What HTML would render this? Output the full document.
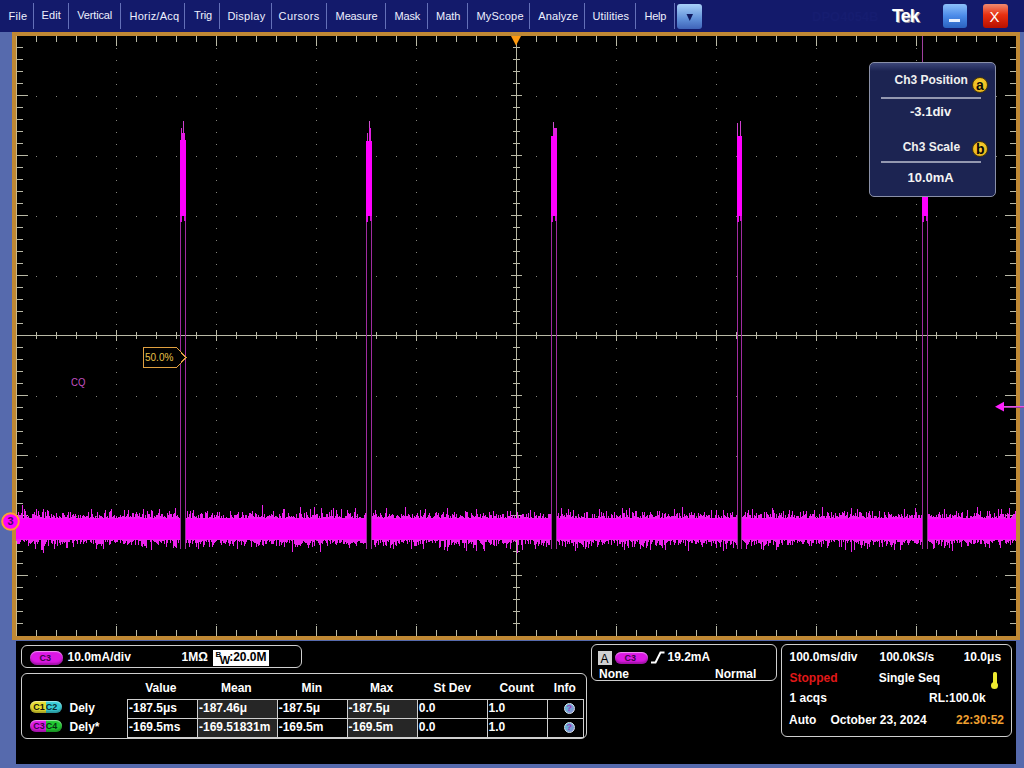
<!DOCTYPE html><html><head><meta charset="utf-8"><style>
*{margin:0;padding:0;box-sizing:border-box}
html,body{width:1024px;height:768px;overflow:hidden;background:#566aad;font-family:"Liberation Sans", sans-serif}
.t{position:absolute;white-space:nowrap;line-height:1}
.a{position:absolute}
</style></head><body>
<div class="a" style="left:0;top:0;width:1024px;height:32px;background:#131a6b"></div>
<div class="t" style="left:8.60px;top:10.69px;font-size:11px;font-weight:normal;color:#eef0ff;letter-spacing:0.230px">File</div>
<div class="t" style="left:41.60px;top:9.69px;font-size:11px;font-weight:normal;color:#eef0ff;letter-spacing:0.100px">Edit</div>
<div class="t" style="left:77.20px;top:9.69px;font-size:11px;font-weight:normal;color:#eef0ff;letter-spacing:-0.140px">Vertical</div>
<div class="t" style="left:129.60px;top:10.69px;font-size:11px;font-weight:normal;color:#eef0ff;letter-spacing:0.220px">Horiz/Acq</div>
<div class="t" style="left:194.00px;top:9.69px;font-size:11px;font-weight:normal;color:#eef0ff;letter-spacing:-0.170px">Trig</div>
<div class="t" style="left:227.40px;top:10.69px;font-size:11px;font-weight:normal;color:#eef0ff;letter-spacing:0.280px">Display</div>
<div class="t" style="left:278.60px;top:10.69px;font-size:11px;font-weight:normal;color:#eef0ff;letter-spacing:0.370px">Cursors</div>
<div class="t" style="left:335.60px;top:10.69px;font-size:11px;font-weight:normal;color:#eef0ff;letter-spacing:-0.130px">Measure</div>
<div class="t" style="left:394.40px;top:10.69px;font-size:11px;font-weight:normal;color:#eef0ff;letter-spacing:-0.100px">Mask</div>
<div class="t" style="left:436.00px;top:10.69px;font-size:11px;font-weight:normal;color:#eef0ff;letter-spacing:0.000px">Math</div>
<div class="t" style="left:476.40px;top:10.69px;font-size:11px;font-weight:normal;color:#eef0ff;letter-spacing:0.220px">MyScope</div>
<div class="t" style="left:538.20px;top:10.69px;font-size:11px;font-weight:normal;color:#eef0ff;letter-spacing:0.130px">Analyze</div>
<div class="t" style="left:592.40px;top:10.69px;font-size:11px;font-weight:normal;color:#eef0ff;letter-spacing:0.150px">Utilities</div>
<div class="t" style="left:644.60px;top:10.69px;font-size:11px;font-weight:normal;color:#eef0ff;letter-spacing:-0.270px">Help</div>
<div class="a" style="left:33px;top:3px;width:1px;height:26px;background:#6470b8"></div>
<div class="a" style="left:68px;top:3px;width:1px;height:26px;background:#6470b8"></div>
<div class="a" style="left:120px;top:3px;width:1px;height:26px;background:#6470b8"></div>
<div class="a" style="left:184px;top:3px;width:1px;height:26px;background:#6470b8"></div>
<div class="a" style="left:219px;top:3px;width:1px;height:26px;background:#6470b8"></div>
<div class="a" style="left:271px;top:3px;width:1px;height:26px;background:#6470b8"></div>
<div class="a" style="left:326px;top:3px;width:1px;height:26px;background:#6470b8"></div>
<div class="a" style="left:385px;top:3px;width:1px;height:26px;background:#6470b8"></div>
<div class="a" style="left:427px;top:3px;width:1px;height:26px;background:#6470b8"></div>
<div class="a" style="left:467px;top:3px;width:1px;height:26px;background:#6470b8"></div>
<div class="a" style="left:529px;top:3px;width:1px;height:26px;background:#6470b8"></div>
<div class="a" style="left:584px;top:3px;width:1px;height:26px;background:#6470b8"></div>
<div class="a" style="left:635px;top:3px;width:1px;height:26px;background:#6470b8"></div>
<div class="a" style="left:674px;top:3px;width:1px;height:26px;background:#6470b8"></div>
<div class="a" style="left:677px;top:4px;width:25px;height:25px;border-radius:3px;background:linear-gradient(#a8d0f8,#5f8fd8 60%,#3f63b8)"></div>
<svg class="a" style="left:0;top:0" width="1024" height="32"><polygon points="686.5,14 693,14 689.75,21" fill="#101a60"/></svg>
<div class="t" style="left:812.00px;top:10.00px;font-size:13px;font-weight:bold;color:#161d70;">DPO4054B</div>
<div class="t" style="left:892.00px;top:7.26px;font-size:18px;font-weight:bold;color:#fff;letter-spacing:-0.9px;text-shadow:1px 1px 0 #8a8a9a">Tek</div>
<div class="a" style="left:943px;top:4px;width:24px;height:24px;border-radius:3px;background:linear-gradient(#8cc0fa,#4a8ae8 50%,#2a62c0)"></div>
<div class="a" style="left:949px;top:19px;width:11px;height:3px;background:#e8f0ff"></div>
<div class="a" style="left:983px;top:4px;width:25px;height:24px;border-radius:3px;background:linear-gradient(#f08a70,#e83010 45%,#b81000)"></div>
<div class="t" style="left:989.50px;top:9.30px;font-size:15px;font-weight:normal;color:#fff;">X</div>
<div class="a" style="left:12px;top:32px;width:1008px;height:608px;background:#bf8834"></div>
<div class="a" style="left:16px;top:36px;width:1000px;height:600px;background:#000"></div>
<div class="a" style="left:16px;top:641px;width:1000px;height:123px;background:#000"></div>
<svg class="a" style="left:0;top:0" width="1024" height="768" shape-rendering="crispEdges"><path d="M116 48h1v1h-1zM116 60h1v1h-1zM116 72h1v1h-1zM116 84h1v1h-1zM116 96h1v1h-1zM116 108h1v1h-1zM116 120h1v1h-1zM116 132h1v1h-1zM116 144h1v1h-1zM116 156h1v1h-1zM116 168h1v1h-1zM116 180h1v1h-1zM116 192h1v1h-1zM116 204h1v1h-1zM116 216h1v1h-1zM116 228h1v1h-1zM116 240h1v1h-1zM116 252h1v1h-1zM116 264h1v1h-1zM116 276h1v1h-1zM116 288h1v1h-1zM116 300h1v1h-1zM116 312h1v1h-1zM116 324h1v1h-1zM116 336h1v1h-1zM116 348h1v1h-1zM116 360h1v1h-1zM116 372h1v1h-1zM116 384h1v1h-1zM116 396h1v1h-1zM116 408h1v1h-1zM116 420h1v1h-1zM116 432h1v1h-1zM116 444h1v1h-1zM116 456h1v1h-1zM116 468h1v1h-1zM116 480h1v1h-1zM116 492h1v1h-1zM116 504h1v1h-1zM116 516h1v1h-1zM116 528h1v1h-1zM116 540h1v1h-1zM116 552h1v1h-1zM116 564h1v1h-1zM116 576h1v1h-1zM116 588h1v1h-1zM116 600h1v1h-1zM116 612h1v1h-1zM116 624h1v1h-1zM216 48h1v1h-1zM216 60h1v1h-1zM216 72h1v1h-1zM216 84h1v1h-1zM216 96h1v1h-1zM216 108h1v1h-1zM216 120h1v1h-1zM216 132h1v1h-1zM216 144h1v1h-1zM216 156h1v1h-1zM216 168h1v1h-1zM216 180h1v1h-1zM216 192h1v1h-1zM216 204h1v1h-1zM216 216h1v1h-1zM216 228h1v1h-1zM216 240h1v1h-1zM216 252h1v1h-1zM216 264h1v1h-1zM216 276h1v1h-1zM216 288h1v1h-1zM216 300h1v1h-1zM216 312h1v1h-1zM216 324h1v1h-1zM216 336h1v1h-1zM216 348h1v1h-1zM216 360h1v1h-1zM216 372h1v1h-1zM216 384h1v1h-1zM216 396h1v1h-1zM216 408h1v1h-1zM216 420h1v1h-1zM216 432h1v1h-1zM216 444h1v1h-1zM216 456h1v1h-1zM216 468h1v1h-1zM216 480h1v1h-1zM216 492h1v1h-1zM216 504h1v1h-1zM216 516h1v1h-1zM216 528h1v1h-1zM216 540h1v1h-1zM216 552h1v1h-1zM216 564h1v1h-1zM216 576h1v1h-1zM216 588h1v1h-1zM216 600h1v1h-1zM216 612h1v1h-1zM216 624h1v1h-1zM316 48h1v1h-1zM316 60h1v1h-1zM316 72h1v1h-1zM316 84h1v1h-1zM316 96h1v1h-1zM316 108h1v1h-1zM316 120h1v1h-1zM316 132h1v1h-1zM316 144h1v1h-1zM316 156h1v1h-1zM316 168h1v1h-1zM316 180h1v1h-1zM316 192h1v1h-1zM316 204h1v1h-1zM316 216h1v1h-1zM316 228h1v1h-1zM316 240h1v1h-1zM316 252h1v1h-1zM316 264h1v1h-1zM316 276h1v1h-1zM316 288h1v1h-1zM316 300h1v1h-1zM316 312h1v1h-1zM316 324h1v1h-1zM316 336h1v1h-1zM316 348h1v1h-1zM316 360h1v1h-1zM316 372h1v1h-1zM316 384h1v1h-1zM316 396h1v1h-1zM316 408h1v1h-1zM316 420h1v1h-1zM316 432h1v1h-1zM316 444h1v1h-1zM316 456h1v1h-1zM316 468h1v1h-1zM316 480h1v1h-1zM316 492h1v1h-1zM316 504h1v1h-1zM316 516h1v1h-1zM316 528h1v1h-1zM316 540h1v1h-1zM316 552h1v1h-1zM316 564h1v1h-1zM316 576h1v1h-1zM316 588h1v1h-1zM316 600h1v1h-1zM316 612h1v1h-1zM316 624h1v1h-1zM416 48h1v1h-1zM416 60h1v1h-1zM416 72h1v1h-1zM416 84h1v1h-1zM416 96h1v1h-1zM416 108h1v1h-1zM416 120h1v1h-1zM416 132h1v1h-1zM416 144h1v1h-1zM416 156h1v1h-1zM416 168h1v1h-1zM416 180h1v1h-1zM416 192h1v1h-1zM416 204h1v1h-1zM416 216h1v1h-1zM416 228h1v1h-1zM416 240h1v1h-1zM416 252h1v1h-1zM416 264h1v1h-1zM416 276h1v1h-1zM416 288h1v1h-1zM416 300h1v1h-1zM416 312h1v1h-1zM416 324h1v1h-1zM416 336h1v1h-1zM416 348h1v1h-1zM416 360h1v1h-1zM416 372h1v1h-1zM416 384h1v1h-1zM416 396h1v1h-1zM416 408h1v1h-1zM416 420h1v1h-1zM416 432h1v1h-1zM416 444h1v1h-1zM416 456h1v1h-1zM416 468h1v1h-1zM416 480h1v1h-1zM416 492h1v1h-1zM416 504h1v1h-1zM416 516h1v1h-1zM416 528h1v1h-1zM416 540h1v1h-1zM416 552h1v1h-1zM416 564h1v1h-1zM416 576h1v1h-1zM416 588h1v1h-1zM416 600h1v1h-1zM416 612h1v1h-1zM416 624h1v1h-1zM616 48h1v1h-1zM616 60h1v1h-1zM616 72h1v1h-1zM616 84h1v1h-1zM616 96h1v1h-1zM616 108h1v1h-1zM616 120h1v1h-1zM616 132h1v1h-1zM616 144h1v1h-1zM616 156h1v1h-1zM616 168h1v1h-1zM616 180h1v1h-1zM616 192h1v1h-1zM616 204h1v1h-1zM616 216h1v1h-1zM616 228h1v1h-1zM616 240h1v1h-1zM616 252h1v1h-1zM616 264h1v1h-1zM616 276h1v1h-1zM616 288h1v1h-1zM616 300h1v1h-1zM616 312h1v1h-1zM616 324h1v1h-1zM616 336h1v1h-1zM616 348h1v1h-1zM616 360h1v1h-1zM616 372h1v1h-1zM616 384h1v1h-1zM616 396h1v1h-1zM616 408h1v1h-1zM616 420h1v1h-1zM616 432h1v1h-1zM616 444h1v1h-1zM616 456h1v1h-1zM616 468h1v1h-1zM616 480h1v1h-1zM616 492h1v1h-1zM616 504h1v1h-1zM616 516h1v1h-1zM616 528h1v1h-1zM616 540h1v1h-1zM616 552h1v1h-1zM616 564h1v1h-1zM616 576h1v1h-1zM616 588h1v1h-1zM616 600h1v1h-1zM616 612h1v1h-1zM616 624h1v1h-1zM716 48h1v1h-1zM716 60h1v1h-1zM716 72h1v1h-1zM716 84h1v1h-1zM716 96h1v1h-1zM716 108h1v1h-1zM716 120h1v1h-1zM716 132h1v1h-1zM716 144h1v1h-1zM716 156h1v1h-1zM716 168h1v1h-1zM716 180h1v1h-1zM716 192h1v1h-1zM716 204h1v1h-1zM716 216h1v1h-1zM716 228h1v1h-1zM716 240h1v1h-1zM716 252h1v1h-1zM716 264h1v1h-1zM716 276h1v1h-1zM716 288h1v1h-1zM716 300h1v1h-1zM716 312h1v1h-1zM716 324h1v1h-1zM716 336h1v1h-1zM716 348h1v1h-1zM716 360h1v1h-1zM716 372h1v1h-1zM716 384h1v1h-1zM716 396h1v1h-1zM716 408h1v1h-1zM716 420h1v1h-1zM716 432h1v1h-1zM716 444h1v1h-1zM716 456h1v1h-1zM716 468h1v1h-1zM716 480h1v1h-1zM716 492h1v1h-1zM716 504h1v1h-1zM716 516h1v1h-1zM716 528h1v1h-1zM716 540h1v1h-1zM716 552h1v1h-1zM716 564h1v1h-1zM716 576h1v1h-1zM716 588h1v1h-1zM716 600h1v1h-1zM716 612h1v1h-1zM716 624h1v1h-1zM816 48h1v1h-1zM816 60h1v1h-1zM816 72h1v1h-1zM816 84h1v1h-1zM816 96h1v1h-1zM816 108h1v1h-1zM816 120h1v1h-1zM816 132h1v1h-1zM816 144h1v1h-1zM816 156h1v1h-1zM816 168h1v1h-1zM816 180h1v1h-1zM816 192h1v1h-1zM816 204h1v1h-1zM816 216h1v1h-1zM816 228h1v1h-1zM816 240h1v1h-1zM816 252h1v1h-1zM816 264h1v1h-1zM816 276h1v1h-1zM816 288h1v1h-1zM816 300h1v1h-1zM816 312h1v1h-1zM816 324h1v1h-1zM816 336h1v1h-1zM816 348h1v1h-1zM816 360h1v1h-1zM816 372h1v1h-1zM816 384h1v1h-1zM816 396h1v1h-1zM816 408h1v1h-1zM816 420h1v1h-1zM816 432h1v1h-1zM816 444h1v1h-1zM816 456h1v1h-1zM816 468h1v1h-1zM816 480h1v1h-1zM816 492h1v1h-1zM816 504h1v1h-1zM816 516h1v1h-1zM816 528h1v1h-1zM816 540h1v1h-1zM816 552h1v1h-1zM816 564h1v1h-1zM816 576h1v1h-1zM816 588h1v1h-1zM816 600h1v1h-1zM816 612h1v1h-1zM816 624h1v1h-1zM916 48h1v1h-1zM916 60h1v1h-1zM916 72h1v1h-1zM916 84h1v1h-1zM916 96h1v1h-1zM916 108h1v1h-1zM916 120h1v1h-1zM916 132h1v1h-1zM916 144h1v1h-1zM916 156h1v1h-1zM916 168h1v1h-1zM916 180h1v1h-1zM916 192h1v1h-1zM916 204h1v1h-1zM916 216h1v1h-1zM916 228h1v1h-1zM916 240h1v1h-1zM916 252h1v1h-1zM916 264h1v1h-1zM916 276h1v1h-1zM916 288h1v1h-1zM916 300h1v1h-1zM916 312h1v1h-1zM916 324h1v1h-1zM916 336h1v1h-1zM916 348h1v1h-1zM916 360h1v1h-1zM916 372h1v1h-1zM916 384h1v1h-1zM916 396h1v1h-1zM916 408h1v1h-1zM916 420h1v1h-1zM916 432h1v1h-1zM916 444h1v1h-1zM916 456h1v1h-1zM916 468h1v1h-1zM916 480h1v1h-1zM916 492h1v1h-1zM916 504h1v1h-1zM916 516h1v1h-1zM916 528h1v1h-1zM916 540h1v1h-1zM916 552h1v1h-1zM916 564h1v1h-1zM916 576h1v1h-1zM916 588h1v1h-1zM916 600h1v1h-1zM916 612h1v1h-1zM916 624h1v1h-1zM36 96h1v1h-1zM56 96h1v1h-1zM76 96h1v1h-1zM96 96h1v1h-1zM136 96h1v1h-1zM156 96h1v1h-1zM176 96h1v1h-1zM196 96h1v1h-1zM236 96h1v1h-1zM256 96h1v1h-1zM276 96h1v1h-1zM296 96h1v1h-1zM336 96h1v1h-1zM356 96h1v1h-1zM376 96h1v1h-1zM396 96h1v1h-1zM436 96h1v1h-1zM456 96h1v1h-1zM476 96h1v1h-1zM496 96h1v1h-1zM536 96h1v1h-1zM556 96h1v1h-1zM576 96h1v1h-1zM596 96h1v1h-1zM636 96h1v1h-1zM656 96h1v1h-1zM676 96h1v1h-1zM696 96h1v1h-1zM736 96h1v1h-1zM756 96h1v1h-1zM776 96h1v1h-1zM796 96h1v1h-1zM836 96h1v1h-1zM856 96h1v1h-1zM876 96h1v1h-1zM896 96h1v1h-1zM936 96h1v1h-1zM956 96h1v1h-1zM976 96h1v1h-1zM996 96h1v1h-1zM36 156h1v1h-1zM56 156h1v1h-1zM76 156h1v1h-1zM96 156h1v1h-1zM136 156h1v1h-1zM156 156h1v1h-1zM176 156h1v1h-1zM196 156h1v1h-1zM236 156h1v1h-1zM256 156h1v1h-1zM276 156h1v1h-1zM296 156h1v1h-1zM336 156h1v1h-1zM356 156h1v1h-1zM376 156h1v1h-1zM396 156h1v1h-1zM436 156h1v1h-1zM456 156h1v1h-1zM476 156h1v1h-1zM496 156h1v1h-1zM536 156h1v1h-1zM556 156h1v1h-1zM576 156h1v1h-1zM596 156h1v1h-1zM636 156h1v1h-1zM656 156h1v1h-1zM676 156h1v1h-1zM696 156h1v1h-1zM736 156h1v1h-1zM756 156h1v1h-1zM776 156h1v1h-1zM796 156h1v1h-1zM836 156h1v1h-1zM856 156h1v1h-1zM876 156h1v1h-1zM896 156h1v1h-1zM936 156h1v1h-1zM956 156h1v1h-1zM976 156h1v1h-1zM996 156h1v1h-1zM36 216h1v1h-1zM56 216h1v1h-1zM76 216h1v1h-1zM96 216h1v1h-1zM136 216h1v1h-1zM156 216h1v1h-1zM176 216h1v1h-1zM196 216h1v1h-1zM236 216h1v1h-1zM256 216h1v1h-1zM276 216h1v1h-1zM296 216h1v1h-1zM336 216h1v1h-1zM356 216h1v1h-1zM376 216h1v1h-1zM396 216h1v1h-1zM436 216h1v1h-1zM456 216h1v1h-1zM476 216h1v1h-1zM496 216h1v1h-1zM536 216h1v1h-1zM556 216h1v1h-1zM576 216h1v1h-1zM596 216h1v1h-1zM636 216h1v1h-1zM656 216h1v1h-1zM676 216h1v1h-1zM696 216h1v1h-1zM736 216h1v1h-1zM756 216h1v1h-1zM776 216h1v1h-1zM796 216h1v1h-1zM836 216h1v1h-1zM856 216h1v1h-1zM876 216h1v1h-1zM896 216h1v1h-1zM936 216h1v1h-1zM956 216h1v1h-1zM976 216h1v1h-1zM996 216h1v1h-1zM36 276h1v1h-1zM56 276h1v1h-1zM76 276h1v1h-1zM96 276h1v1h-1zM136 276h1v1h-1zM156 276h1v1h-1zM176 276h1v1h-1zM196 276h1v1h-1zM236 276h1v1h-1zM256 276h1v1h-1zM276 276h1v1h-1zM296 276h1v1h-1zM336 276h1v1h-1zM356 276h1v1h-1zM376 276h1v1h-1zM396 276h1v1h-1zM436 276h1v1h-1zM456 276h1v1h-1zM476 276h1v1h-1zM496 276h1v1h-1zM536 276h1v1h-1zM556 276h1v1h-1zM576 276h1v1h-1zM596 276h1v1h-1zM636 276h1v1h-1zM656 276h1v1h-1zM676 276h1v1h-1zM696 276h1v1h-1zM736 276h1v1h-1zM756 276h1v1h-1zM776 276h1v1h-1zM796 276h1v1h-1zM836 276h1v1h-1zM856 276h1v1h-1zM876 276h1v1h-1zM896 276h1v1h-1zM936 276h1v1h-1zM956 276h1v1h-1zM976 276h1v1h-1zM996 276h1v1h-1zM36 396h1v1h-1zM56 396h1v1h-1zM76 396h1v1h-1zM96 396h1v1h-1zM136 396h1v1h-1zM156 396h1v1h-1zM176 396h1v1h-1zM196 396h1v1h-1zM236 396h1v1h-1zM256 396h1v1h-1zM276 396h1v1h-1zM296 396h1v1h-1zM336 396h1v1h-1zM356 396h1v1h-1zM376 396h1v1h-1zM396 396h1v1h-1zM436 396h1v1h-1zM456 396h1v1h-1zM476 396h1v1h-1zM496 396h1v1h-1zM536 396h1v1h-1zM556 396h1v1h-1zM576 396h1v1h-1zM596 396h1v1h-1zM636 396h1v1h-1zM656 396h1v1h-1zM676 396h1v1h-1zM696 396h1v1h-1zM736 396h1v1h-1zM756 396h1v1h-1zM776 396h1v1h-1zM796 396h1v1h-1zM836 396h1v1h-1zM856 396h1v1h-1zM876 396h1v1h-1zM896 396h1v1h-1zM936 396h1v1h-1zM956 396h1v1h-1zM976 396h1v1h-1zM996 396h1v1h-1zM36 456h1v1h-1zM56 456h1v1h-1zM76 456h1v1h-1zM96 456h1v1h-1zM136 456h1v1h-1zM156 456h1v1h-1zM176 456h1v1h-1zM196 456h1v1h-1zM236 456h1v1h-1zM256 456h1v1h-1zM276 456h1v1h-1zM296 456h1v1h-1zM336 456h1v1h-1zM356 456h1v1h-1zM376 456h1v1h-1zM396 456h1v1h-1zM436 456h1v1h-1zM456 456h1v1h-1zM476 456h1v1h-1zM496 456h1v1h-1zM536 456h1v1h-1zM556 456h1v1h-1zM576 456h1v1h-1zM596 456h1v1h-1zM636 456h1v1h-1zM656 456h1v1h-1zM676 456h1v1h-1zM696 456h1v1h-1zM736 456h1v1h-1zM756 456h1v1h-1zM776 456h1v1h-1zM796 456h1v1h-1zM836 456h1v1h-1zM856 456h1v1h-1zM876 456h1v1h-1zM896 456h1v1h-1zM936 456h1v1h-1zM956 456h1v1h-1zM976 456h1v1h-1zM996 456h1v1h-1zM36 516h1v1h-1zM56 516h1v1h-1zM76 516h1v1h-1zM96 516h1v1h-1zM136 516h1v1h-1zM156 516h1v1h-1zM176 516h1v1h-1zM196 516h1v1h-1zM236 516h1v1h-1zM256 516h1v1h-1zM276 516h1v1h-1zM296 516h1v1h-1zM336 516h1v1h-1zM356 516h1v1h-1zM376 516h1v1h-1zM396 516h1v1h-1zM436 516h1v1h-1zM456 516h1v1h-1zM476 516h1v1h-1zM496 516h1v1h-1zM536 516h1v1h-1zM556 516h1v1h-1zM576 516h1v1h-1zM596 516h1v1h-1zM636 516h1v1h-1zM656 516h1v1h-1zM676 516h1v1h-1zM696 516h1v1h-1zM736 516h1v1h-1zM756 516h1v1h-1zM776 516h1v1h-1zM796 516h1v1h-1zM836 516h1v1h-1zM856 516h1v1h-1zM876 516h1v1h-1zM896 516h1v1h-1zM936 516h1v1h-1zM956 516h1v1h-1zM976 516h1v1h-1zM996 516h1v1h-1zM36 576h1v1h-1zM56 576h1v1h-1zM76 576h1v1h-1zM96 576h1v1h-1zM136 576h1v1h-1zM156 576h1v1h-1zM176 576h1v1h-1zM196 576h1v1h-1zM236 576h1v1h-1zM256 576h1v1h-1zM276 576h1v1h-1zM296 576h1v1h-1zM336 576h1v1h-1zM356 576h1v1h-1zM376 576h1v1h-1zM396 576h1v1h-1zM436 576h1v1h-1zM456 576h1v1h-1zM476 576h1v1h-1zM496 576h1v1h-1zM536 576h1v1h-1zM556 576h1v1h-1zM576 576h1v1h-1zM596 576h1v1h-1zM636 576h1v1h-1zM656 576h1v1h-1zM676 576h1v1h-1zM696 576h1v1h-1zM736 576h1v1h-1zM756 576h1v1h-1zM776 576h1v1h-1zM796 576h1v1h-1zM836 576h1v1h-1zM856 576h1v1h-1zM876 576h1v1h-1zM896 576h1v1h-1zM936 576h1v1h-1zM956 576h1v1h-1zM976 576h1v1h-1zM996 576h1v1h-1z" fill="#84847c"/><path d="M36 36h1v6h-1zM36 630h1v6h-1zM56 36h1v6h-1zM56 630h1v6h-1zM76 36h1v6h-1zM76 630h1v6h-1zM96 36h1v6h-1zM96 630h1v6h-1zM116 36h1v10h-1zM116 626h1v10h-1zM136 36h1v6h-1zM136 630h1v6h-1zM156 36h1v6h-1zM156 630h1v6h-1zM176 36h1v6h-1zM176 630h1v6h-1zM196 36h1v6h-1zM196 630h1v6h-1zM216 36h1v10h-1zM216 626h1v10h-1zM236 36h1v6h-1zM236 630h1v6h-1zM256 36h1v6h-1zM256 630h1v6h-1zM276 36h1v6h-1zM276 630h1v6h-1zM296 36h1v6h-1zM296 630h1v6h-1zM316 36h1v10h-1zM316 626h1v10h-1zM336 36h1v6h-1zM336 630h1v6h-1zM356 36h1v6h-1zM356 630h1v6h-1zM376 36h1v6h-1zM376 630h1v6h-1zM396 36h1v6h-1zM396 630h1v6h-1zM416 36h1v10h-1zM416 626h1v10h-1zM436 36h1v6h-1zM436 630h1v6h-1zM456 36h1v6h-1zM456 630h1v6h-1zM476 36h1v6h-1zM476 630h1v6h-1zM496 36h1v6h-1zM496 630h1v6h-1zM516 36h1v10h-1zM516 626h1v10h-1zM536 36h1v6h-1zM536 630h1v6h-1zM556 36h1v6h-1zM556 630h1v6h-1zM576 36h1v6h-1zM576 630h1v6h-1zM596 36h1v6h-1zM596 630h1v6h-1zM616 36h1v10h-1zM616 626h1v10h-1zM636 36h1v6h-1zM636 630h1v6h-1zM656 36h1v6h-1zM656 630h1v6h-1zM676 36h1v6h-1zM676 630h1v6h-1zM696 36h1v6h-1zM696 630h1v6h-1zM716 36h1v10h-1zM716 626h1v10h-1zM736 36h1v6h-1zM736 630h1v6h-1zM756 36h1v6h-1zM756 630h1v6h-1zM776 36h1v6h-1zM776 630h1v6h-1zM796 36h1v6h-1zM796 630h1v6h-1zM816 36h1v10h-1zM816 626h1v10h-1zM836 36h1v6h-1zM836 630h1v6h-1zM856 36h1v6h-1zM856 630h1v6h-1zM876 36h1v6h-1zM876 630h1v6h-1zM896 36h1v6h-1zM896 630h1v6h-1zM916 36h1v10h-1zM916 626h1v10h-1zM936 36h1v6h-1zM936 630h1v6h-1zM956 36h1v6h-1zM956 630h1v6h-1zM976 36h1v6h-1zM976 630h1v6h-1zM996 36h1v6h-1zM996 630h1v6h-1zM17 47h6v1h-6zM1010 47h6v1h-6zM17 59h6v1h-6zM1010 59h6v1h-6zM17 71h6v1h-6zM1010 71h6v1h-6zM17 83h6v1h-6zM1010 83h6v1h-6zM17 95h11v1h-11zM1005 95h11v1h-11zM17 107h6v1h-6zM1010 107h6v1h-6zM17 119h6v1h-6zM1010 119h6v1h-6zM17 131h6v1h-6zM1010 131h6v1h-6zM17 143h6v1h-6zM1010 143h6v1h-6zM17 155h11v1h-11zM1005 155h11v1h-11zM17 167h6v1h-6zM1010 167h6v1h-6zM17 179h6v1h-6zM1010 179h6v1h-6zM17 191h6v1h-6zM1010 191h6v1h-6zM17 203h6v1h-6zM1010 203h6v1h-6zM17 215h11v1h-11zM1005 215h11v1h-11zM17 227h6v1h-6zM1010 227h6v1h-6zM17 239h6v1h-6zM1010 239h6v1h-6zM17 251h6v1h-6zM1010 251h6v1h-6zM17 263h6v1h-6zM1010 263h6v1h-6zM17 275h11v1h-11zM1005 275h11v1h-11zM17 287h6v1h-6zM1010 287h6v1h-6zM17 299h6v1h-6zM1010 299h6v1h-6zM17 311h6v1h-6zM1010 311h6v1h-6zM17 323h6v1h-6zM1010 323h6v1h-6zM17 335h11v1h-11zM1005 335h11v1h-11zM17 347h6v1h-6zM1010 347h6v1h-6zM17 359h6v1h-6zM1010 359h6v1h-6zM17 371h6v1h-6zM1010 371h6v1h-6zM17 383h6v1h-6zM1010 383h6v1h-6zM17 395h11v1h-11zM1005 395h11v1h-11zM17 407h6v1h-6zM1010 407h6v1h-6zM17 419h6v1h-6zM1010 419h6v1h-6zM17 431h6v1h-6zM1010 431h6v1h-6zM17 443h6v1h-6zM1010 443h6v1h-6zM17 455h11v1h-11zM1005 455h11v1h-11zM17 467h6v1h-6zM1010 467h6v1h-6zM17 479h6v1h-6zM1010 479h6v1h-6zM17 491h6v1h-6zM1010 491h6v1h-6zM17 503h6v1h-6zM1010 503h6v1h-6zM17 515h11v1h-11zM1005 515h11v1h-11zM17 527h6v1h-6zM1010 527h6v1h-6zM17 539h6v1h-6zM1010 539h6v1h-6zM17 551h6v1h-6zM1010 551h6v1h-6zM17 563h6v1h-6zM1010 563h6v1h-6zM17 575h11v1h-11zM1005 575h11v1h-11zM17 587h6v1h-6zM1010 587h6v1h-6zM17 599h6v1h-6zM1010 599h6v1h-6zM17 611h6v1h-6zM1010 611h6v1h-6zM17 623h6v1h-6zM1010 623h6v1h-6zM17 335h999v1h-999zM516 45h1v591h-1zM36 332h1v7h-1zM56 332h1v7h-1zM76 332h1v7h-1zM96 332h1v7h-1zM116 330h1v11h-1zM136 332h1v7h-1zM156 332h1v7h-1zM176 332h1v7h-1zM196 332h1v7h-1zM216 330h1v11h-1zM236 332h1v7h-1zM256 332h1v7h-1zM276 332h1v7h-1zM296 332h1v7h-1zM316 330h1v11h-1zM336 332h1v7h-1zM356 332h1v7h-1zM376 332h1v7h-1zM396 332h1v7h-1zM416 330h1v11h-1zM436 332h1v7h-1zM456 332h1v7h-1zM476 332h1v7h-1zM496 332h1v7h-1zM536 332h1v7h-1zM556 332h1v7h-1zM576 332h1v7h-1zM596 332h1v7h-1zM616 330h1v11h-1zM636 332h1v7h-1zM656 332h1v7h-1zM676 332h1v7h-1zM696 332h1v7h-1zM716 330h1v11h-1zM736 332h1v7h-1zM756 332h1v7h-1zM776 332h1v7h-1zM796 332h1v7h-1zM816 330h1v11h-1zM836 332h1v7h-1zM856 332h1v7h-1zM876 332h1v7h-1zM896 332h1v7h-1zM916 330h1v11h-1zM936 332h1v7h-1zM956 332h1v7h-1zM976 332h1v7h-1zM996 332h1v7h-1zM513 47h7v1h-7zM513 59h7v1h-7zM513 71h7v1h-7zM513 83h7v1h-7zM511 95h11v1h-11zM513 107h7v1h-7zM513 119h7v1h-7zM513 131h7v1h-7zM513 143h7v1h-7zM511 155h11v1h-11zM513 167h7v1h-7zM513 179h7v1h-7zM513 191h7v1h-7zM513 203h7v1h-7zM511 215h11v1h-11zM513 227h7v1h-7zM513 239h7v1h-7zM513 251h7v1h-7zM513 263h7v1h-7zM511 275h11v1h-11zM513 287h7v1h-7zM513 299h7v1h-7zM513 311h7v1h-7zM513 323h7v1h-7zM513 347h7v1h-7zM513 359h7v1h-7zM513 371h7v1h-7zM513 383h7v1h-7zM511 395h11v1h-11zM513 407h7v1h-7zM513 419h7v1h-7zM513 431h7v1h-7zM513 443h7v1h-7zM511 455h11v1h-11zM513 467h7v1h-7zM513 479h7v1h-7zM513 491h7v1h-7zM513 503h7v1h-7zM511 515h11v1h-11zM513 527h7v1h-7zM513 539h7v1h-7zM513 551h7v1h-7zM513 563h7v1h-7zM511 575h11v1h-11zM513 587h7v1h-7zM513 599h7v1h-7zM513 611h7v1h-7zM513 623h7v1h-7z" fill="#b9b9a6"/><rect x="16" y="36" width="1" height="600" fill="#c8b88a"/><path d="M16 514h1V541h-1zM17 517h1V544h-1zM18 512h1V544h-1zM19 515h1V544h-1zM20 515h1V542h-1zM21 513h1V540h-1zM22 505h1V540h-1zM23 518h1V541h-1zM24 509h1V542h-1zM25 511h1V540h-1zM26 515h1V541h-1zM27 517h1V540h-1zM28 516h1V546h-1zM29 518h1V543h-1zM30 518h1V544h-1zM31 518h1V543h-1zM32 514h1V542h-1zM33 514h1V541h-1zM34 512h1V544h-1zM35 515h1V549h-1zM36 509h1V542h-1zM37 516h1V544h-1zM38 511h1V542h-1zM39 515h1V540h-1zM40 517h1V540h-1zM41 517h1V550h-1zM42 512h1V550h-1zM43 509h1V553h-1zM44 518h1V546h-1zM45 512h1V544h-1zM46 516h1V542h-1zM47 510h1V540h-1zM48 511h1V546h-1zM49 516h1V540h-1zM50 518h1V540h-1zM51 514h1V543h-1zM52 517h1V544h-1zM53 515h1V541h-1zM54 516h1V549h-1zM55 518h1V544h-1zM56 513h1V540h-1zM57 517h1V546h-1zM58 518h1V540h-1zM59 516h1V543h-1zM60 517h1V545h-1zM61 518h1V542h-1zM62 513h1V544h-1zM63 513h1V542h-1zM64 515h1V543h-1zM65 517h1V542h-1zM66 517h1V548h-1zM67 515h1V548h-1zM68 512h1V542h-1zM69 518h1V542h-1zM70 512h1V540h-1zM71 517h1V540h-1zM72 515h1V543h-1zM73 514h1V547h-1zM74 516h1V541h-1zM75 514h1V540h-1zM76 518h1V541h-1zM77 518h1V544h-1zM78 515h1V540h-1zM79 518h1V540h-1zM80 515h1V544h-1zM81 518h1V542h-1zM82 516h1V540h-1zM83 515h1V544h-1zM84 516h1V542h-1zM85 517h1V541h-1zM86 516h1V543h-1zM87 516h1V540h-1zM88 512h1V540h-1zM89 518h1V540h-1zM90 517h1V542h-1zM91 509h1V543h-1zM92 514h1V540h-1zM93 517h1V544h-1zM94 518h1V540h-1zM95 516h1V543h-1zM96 518h1V549h-1zM97 512h1V545h-1zM98 518h1V544h-1zM99 515h1V544h-1zM100 516h1V544h-1zM101 516h1V546h-1zM102 517h1V544h-1zM103 518h1V549h-1zM104 513h1V540h-1zM105 510h1V542h-1zM106 517h1V540h-1zM107 516h1V542h-1zM108 518h1V540h-1zM109 512h1V545h-1zM110 511h1V544h-1zM111 509h1V541h-1zM112 517h1V541h-1zM113 516h1V540h-1zM114 515h1V542h-1zM115 518h1V543h-1zM116 516h1V542h-1zM117 518h1V542h-1zM118 517h1V540h-1zM119 517h1V540h-1zM120 515h1V543h-1zM121 517h1V540h-1zM122 516h1V541h-1zM123 516h1V544h-1zM124 510h1V544h-1zM125 517h1V543h-1zM126 516h1V541h-1zM127 514h1V545h-1zM128 510h1V544h-1zM129 517h1V543h-1zM130 516h1V542h-1zM131 517h1V545h-1zM132 513h1V542h-1zM133 513h1V541h-1zM134 517h1V540h-1zM135 514h1V545h-1zM136 512h1V540h-1zM137 514h1V540h-1zM138 516h1V545h-1zM139 513h1V541h-1zM140 517h1V541h-1zM141 517h1V546h-1zM142 514h1V547h-1zM143 509h1V544h-1zM144 518h1V546h-1zM145 515h1V546h-1zM146 518h1V548h-1zM147 511h1V540h-1zM148 514h1V540h-1zM149 514h1V540h-1zM150 517h1V542h-1zM151 510h1V550h-1zM152 511h1V540h-1zM153 518h1V541h-1zM154 516h1V542h-1zM155 517h1V542h-1zM156 515h1V543h-1zM157 515h1V544h-1zM158 513h1V545h-1zM159 509h1V541h-1zM160 516h1V542h-1zM161 514h1V543h-1zM162 514h1V541h-1zM163 517h1V541h-1zM164 516h1V544h-1zM165 517h1V540h-1zM166 518h1V547h-1zM167 513h1V543h-1zM168 515h1V540h-1zM169 511h1V540h-1zM170 514h1V543h-1zM171 514h1V540h-1zM172 517h1V541h-1zM173 514h1V548h-1zM174 513h1V546h-1zM175 508h1V547h-1zM176 516h1V548h-1zM177 515h1V540h-1zM178 517h1V543h-1zM179 518h1V540h-1zM180 516h1V541h-1zM181 518h1V540h-1zM182 514h1V540h-1zM183 506h1V541h-1zM184 511h1V543h-1zM185 518h1V541h-1zM186 518h1V543h-1zM187 511h1V540h-1zM188 517h1V543h-1zM189 514h1V547h-1zM190 511h1V543h-1zM191 518h1V540h-1zM192 513h1V544h-1zM193 510h1V541h-1zM194 516h1V540h-1zM195 517h1V543h-1zM196 517h1V547h-1zM197 518h1V543h-1zM198 515h1V549h-1zM199 518h1V542h-1zM200 514h1V544h-1zM201 513h1V542h-1zM202 514h1V541h-1zM203 518h1V547h-1zM204 518h1V545h-1zM205 512h1V541h-1zM206 513h1V542h-1zM207 511h1V540h-1zM208 518h1V542h-1zM209 517h1V547h-1zM210 517h1V540h-1zM211 515h1V542h-1zM212 513h1V547h-1zM213 518h1V545h-1zM214 515h1V543h-1zM215 517h1V542h-1zM216 515h1V541h-1zM217 512h1V540h-1zM218 516h1V540h-1zM219 512h1V540h-1zM220 518h1V543h-1zM221 516h1V545h-1zM222 518h1V541h-1zM223 515h1V543h-1zM224 518h1V543h-1zM225 518h1V544h-1zM226 517h1V542h-1zM227 518h1V540h-1zM228 518h1V543h-1zM229 518h1V546h-1zM230 511h1V544h-1zM231 515h1V541h-1zM232 517h1V544h-1zM233 518h1V546h-1zM234 515h1V542h-1zM235 515h1V541h-1zM236 515h1V540h-1zM237 514h1V549h-1zM238 512h1V541h-1zM239 518h1V542h-1zM240 518h1V541h-1zM241 517h1V545h-1zM242 512h1V541h-1zM243 515h1V542h-1zM244 518h1V546h-1zM245 515h1V544h-1zM246 515h1V542h-1zM247 518h1V540h-1zM248 516h1V540h-1zM249 513h1V540h-1zM250 513h1V541h-1zM251 514h1V547h-1zM252 511h1V541h-1zM253 516h1V542h-1zM254 517h1V543h-1zM255 513h1V543h-1zM256 514h1V547h-1zM257 517h1V544h-1zM258 515h1V546h-1zM259 517h1V545h-1zM260 517h1V542h-1zM261 516h1V540h-1zM262 505h1V545h-1zM263 517h1V546h-1zM264 514h1V541h-1zM265 518h1V544h-1zM266 517h1V544h-1zM267 516h1V541h-1zM268 516h1V540h-1zM269 515h1V542h-1zM270 516h1V541h-1zM271 514h1V544h-1zM272 515h1V544h-1zM273 511h1V544h-1zM274 517h1V541h-1zM275 516h1V540h-1zM276 517h1V546h-1zM277 517h1V540h-1zM278 518h1V540h-1zM279 514h1V546h-1zM280 516h1V542h-1zM281 518h1V545h-1zM282 513h1V543h-1zM283 509h1V542h-1zM284 509h1V547h-1zM285 518h1V542h-1zM286 517h1V543h-1zM287 517h1V542h-1zM288 513h1V540h-1zM289 516h1V543h-1zM290 517h1V540h-1zM291 516h1V541h-1zM292 517h1V552h-1zM293 516h1V540h-1zM294 517h1V544h-1zM295 518h1V547h-1zM296 514h1V545h-1zM297 518h1V547h-1zM298 518h1V545h-1zM299 513h1V545h-1zM300 507h1V546h-1zM301 514h1V544h-1zM302 517h1V543h-1zM303 518h1V541h-1zM304 513h1V542h-1zM305 518h1V543h-1zM306 512h1V543h-1zM307 515h1V545h-1zM308 517h1V548h-1zM309 518h1V545h-1zM310 509h1V543h-1zM311 517h1V541h-1zM312 515h1V547h-1zM313 515h1V542h-1zM314 507h1V546h-1zM315 515h1V540h-1zM316 514h1V540h-1zM317 514h1V541h-1zM318 518h1V543h-1zM319 516h1V545h-1zM320 518h1V552h-1zM321 508h1V543h-1zM322 513h1V544h-1zM323 517h1V541h-1zM324 517h1V540h-1zM325 517h1V541h-1zM326 514h1V543h-1zM327 514h1V546h-1zM328 517h1V540h-1zM329 512h1V541h-1zM330 516h1V544h-1zM331 510h1V540h-1zM332 516h1V543h-1zM333 508h1V542h-1zM334 518h1V541h-1zM335 516h1V544h-1zM336 510h1V545h-1zM337 514h1V543h-1zM338 517h1V540h-1zM339 516h1V543h-1zM340 517h1V543h-1zM341 509h1V542h-1zM342 518h1V540h-1zM343 518h1V544h-1zM344 518h1V544h-1zM345 516h1V542h-1zM346 516h1V544h-1zM347 510h1V543h-1zM348 513h1V545h-1zM349 514h1V548h-1zM350 513h1V544h-1zM351 517h1V543h-1zM352 516h1V543h-1zM353 518h1V542h-1zM354 512h1V543h-1zM355 508h1V544h-1zM356 518h1V546h-1zM357 514h1V542h-1zM358 518h1V541h-1zM359 517h1V541h-1zM360 517h1V543h-1zM361 518h1V543h-1zM362 518h1V543h-1zM363 518h1V544h-1zM364 515h1V543h-1zM365 513h1V543h-1zM366 518h1V544h-1zM367 515h1V541h-1zM368 518h1V541h-1zM369 515h1V540h-1zM370 513h1V541h-1zM371 517h1V540h-1zM372 516h1V540h-1zM373 513h1V540h-1zM374 515h1V545h-1zM375 510h1V547h-1zM376 514h1V543h-1zM377 517h1V541h-1zM378 516h1V545h-1zM379 517h1V540h-1zM380 513h1V543h-1zM381 515h1V540h-1zM382 517h1V542h-1zM383 518h1V546h-1zM384 517h1V542h-1zM385 513h1V545h-1zM386 508h1V546h-1zM387 517h1V541h-1zM388 516h1V542h-1zM389 514h1V540h-1zM390 516h1V548h-1zM391 515h1V545h-1zM392 514h1V544h-1zM393 515h1V549h-1zM394 518h1V542h-1zM395 518h1V545h-1zM396 516h1V546h-1zM397 515h1V541h-1zM398 516h1V543h-1zM399 517h1V544h-1zM400 518h1V540h-1zM401 514h1V542h-1zM402 516h1V542h-1zM403 515h1V543h-1zM404 516h1V541h-1zM405 507h1V540h-1zM406 516h1V541h-1zM407 516h1V544h-1zM408 514h1V540h-1zM409 515h1V542h-1zM410 517h1V540h-1zM411 518h1V549h-1zM412 514h1V540h-1zM413 518h1V542h-1zM414 516h1V546h-1zM415 517h1V546h-1zM416 515h1V546h-1zM417 513h1V542h-1zM418 516h1V545h-1zM419 518h1V541h-1zM420 510h1V544h-1zM421 516h1V540h-1zM422 517h1V544h-1zM423 515h1V549h-1zM424 513h1V541h-1zM425 509h1V540h-1zM426 518h1V543h-1zM427 517h1V540h-1zM428 515h1V542h-1zM429 513h1V542h-1zM430 516h1V541h-1zM431 518h1V541h-1zM432 518h1V543h-1zM433 517h1V540h-1zM434 516h1V541h-1zM435 513h1V543h-1zM436 512h1V541h-1zM437 515h1V541h-1zM438 513h1V540h-1zM439 517h1V548h-1zM440 518h1V547h-1zM441 515h1V541h-1zM442 514h1V541h-1zM443 512h1V541h-1zM444 517h1V550h-1zM445 517h1V547h-1zM446 514h1V540h-1zM447 508h1V551h-1zM448 515h1V547h-1zM449 518h1V545h-1zM450 516h1V540h-1zM451 518h1V545h-1zM452 514h1V543h-1zM453 515h1V542h-1zM454 512h1V545h-1zM455 517h1V543h-1zM456 514h1V544h-1zM457 518h1V542h-1zM458 518h1V544h-1zM459 517h1V546h-1zM460 515h1V540h-1zM461 516h1V540h-1zM462 516h1V543h-1zM463 517h1V543h-1zM464 518h1V548h-1zM465 511h1V543h-1zM466 512h1V551h-1zM467 512h1V540h-1zM468 517h1V544h-1zM469 518h1V543h-1zM470 518h1V542h-1zM471 513h1V544h-1zM472 515h1V542h-1zM473 516h1V548h-1zM474 517h1V545h-1zM475 516h1V545h-1zM476 509h1V551h-1zM477 514h1V540h-1zM478 517h1V540h-1zM479 517h1V541h-1zM480 514h1V543h-1zM481 518h1V544h-1zM482 516h1V545h-1zM483 513h1V549h-1zM484 516h1V551h-1zM485 515h1V542h-1zM486 517h1V542h-1zM487 517h1V540h-1zM488 518h1V542h-1zM489 512h1V543h-1zM490 515h1V545h-1zM491 515h1V544h-1zM492 518h1V540h-1zM493 511h1V545h-1zM494 516h1V546h-1zM495 516h1V540h-1zM496 514h1V546h-1zM497 518h1V540h-1zM498 515h1V544h-1zM499 518h1V541h-1zM500 515h1V540h-1zM501 517h1V540h-1zM502 514h1V543h-1zM503 514h1V544h-1zM504 518h1V543h-1zM505 517h1V543h-1zM506 518h1V548h-1zM507 511h1V544h-1zM508 516h1V543h-1zM509 516h1V542h-1zM510 511h1V549h-1zM511 517h1V543h-1zM512 515h1V540h-1zM513 518h1V542h-1zM514 515h1V541h-1zM515 518h1V542h-1zM516 518h1V540h-1zM517 512h1V553h-1zM518 516h1V545h-1zM519 518h1V540h-1zM520 516h1V540h-1zM521 515h1V545h-1zM522 514h1V550h-1zM523 514h1V540h-1zM524 517h1V540h-1zM525 517h1V544h-1zM526 514h1V540h-1zM527 517h1V541h-1zM528 513h1V544h-1zM529 518h1V540h-1zM530 510h1V544h-1zM531 517h1V540h-1zM532 518h1V540h-1zM533 518h1V541h-1zM534 512h1V545h-1zM535 516h1V549h-1zM536 515h1V544h-1zM537 518h1V542h-1zM538 516h1V546h-1zM539 516h1V544h-1zM540 513h1V540h-1zM541 518h1V545h-1zM542 516h1V543h-1zM543 514h1V546h-1zM544 518h1V543h-1zM545 517h1V541h-1zM546 518h1V547h-1zM547 518h1V543h-1zM548 514h1V545h-1zM549 514h1V545h-1zM550 514h1V540h-1zM551 515h1V544h-1zM552 517h1V541h-1zM553 511h1V546h-1zM554 517h1V542h-1zM555 517h1V545h-1zM556 516h1V540h-1zM557 516h1V541h-1zM558 513h1V542h-1zM559 518h1V545h-1zM560 516h1V540h-1zM561 508h1V541h-1zM562 514h1V546h-1zM563 516h1V541h-1zM564 515h1V542h-1zM565 517h1V547h-1zM566 513h1V541h-1zM567 515h1V544h-1zM568 509h1V542h-1zM569 515h1V544h-1zM570 512h1V540h-1zM571 517h1V543h-1zM572 516h1V543h-1zM573 510h1V546h-1zM574 518h1V542h-1zM575 516h1V551h-1zM576 517h1V544h-1zM577 518h1V548h-1zM578 514h1V542h-1zM579 517h1V543h-1zM580 518h1V543h-1zM581 516h1V544h-1zM582 517h1V545h-1zM583 517h1V547h-1zM584 513h1V541h-1zM585 518h1V549h-1zM586 512h1V547h-1zM587 512h1V542h-1zM588 518h1V548h-1zM589 518h1V544h-1zM590 518h1V541h-1zM591 518h1V546h-1zM592 514h1V542h-1zM593 518h1V543h-1zM594 514h1V540h-1zM595 518h1V541h-1zM596 518h1V541h-1zM597 518h1V547h-1zM598 516h1V545h-1zM599 509h1V542h-1zM600 517h1V540h-1zM601 512h1V542h-1zM602 516h1V545h-1zM603 513h1V543h-1zM604 516h1V544h-1zM605 518h1V542h-1zM606 511h1V541h-1zM607 518h1V541h-1zM608 516h1V544h-1zM609 518h1V540h-1zM610 518h1V540h-1zM611 514h1V545h-1zM612 515h1V540h-1zM613 518h1V541h-1zM614 512h1V543h-1zM615 518h1V540h-1zM616 515h1V540h-1zM617 516h1V546h-1zM618 517h1V540h-1zM619 516h1V544h-1zM620 515h1V544h-1zM621 518h1V542h-1zM622 508h1V547h-1zM623 513h1V542h-1zM624 513h1V550h-1zM625 517h1V544h-1zM626 510h1V541h-1zM627 515h1V546h-1zM628 517h1V548h-1zM629 508h1V540h-1zM630 518h1V541h-1zM631 518h1V542h-1zM632 512h1V547h-1zM633 513h1V541h-1zM634 516h1V547h-1zM635 511h1V544h-1zM636 511h1V541h-1zM637 517h1V542h-1zM638 517h1V540h-1zM639 518h1V544h-1zM640 516h1V549h-1zM641 518h1V545h-1zM642 512h1V546h-1zM643 515h1V547h-1zM644 512h1V543h-1zM645 517h1V541h-1zM646 516h1V548h-1zM647 515h1V546h-1zM648 518h1V542h-1zM649 515h1V540h-1zM650 512h1V550h-1zM651 514h1V544h-1zM652 515h1V542h-1zM653 517h1V540h-1zM654 517h1V540h-1zM655 516h1V545h-1zM656 516h1V546h-1zM657 511h1V543h-1zM658 515h1V541h-1zM659 511h1V545h-1zM660 518h1V545h-1zM661 517h1V546h-1zM662 513h1V548h-1zM663 518h1V540h-1zM664 514h1V545h-1zM665 513h1V550h-1zM666 517h1V543h-1zM667 516h1V542h-1zM668 514h1V541h-1zM669 516h1V541h-1zM670 517h1V545h-1zM671 516h1V541h-1zM672 516h1V540h-1zM673 516h1V542h-1zM674 509h1V545h-1zM675 516h1V543h-1zM676 514h1V540h-1zM677 513h1V540h-1zM678 518h1V545h-1zM679 513h1V543h-1zM680 516h1V544h-1zM681 518h1V542h-1zM682 507h1V540h-1zM683 517h1V543h-1zM684 514h1V540h-1zM685 516h1V546h-1zM686 515h1V540h-1zM687 516h1V541h-1zM688 518h1V551h-1zM689 513h1V542h-1zM690 515h1V541h-1zM691 512h1V543h-1zM692 515h1V543h-1zM693 515h1V540h-1zM694 513h1V541h-1zM695 518h1V544h-1zM696 517h1V544h-1zM697 518h1V542h-1zM698 513h1V543h-1zM699 516h1V540h-1zM700 514h1V542h-1zM701 515h1V545h-1zM702 516h1V547h-1zM703 515h1V543h-1zM704 512h1V543h-1zM705 517h1V541h-1zM706 515h1V544h-1zM707 516h1V540h-1zM708 515h1V542h-1zM709 515h1V542h-1zM710 518h1V542h-1zM711 510h1V546h-1zM712 518h1V541h-1zM713 518h1V543h-1zM714 518h1V541h-1zM715 515h1V544h-1zM716 510h1V548h-1zM717 518h1V541h-1zM718 515h1V542h-1zM719 517h1V543h-1zM720 518h1V547h-1zM721 516h1V542h-1zM722 518h1V540h-1zM723 510h1V551h-1zM724 515h1V541h-1zM725 516h1V544h-1zM726 517h1V549h-1zM727 513h1V543h-1zM728 517h1V541h-1zM729 518h1V541h-1zM730 513h1V545h-1zM731 515h1V544h-1zM732 512h1V541h-1zM733 517h1V548h-1zM734 517h1V542h-1zM735 517h1V543h-1zM736 515h1V545h-1zM737 514h1V547h-1zM738 516h1V542h-1zM739 514h1V542h-1zM740 518h1V545h-1zM741 515h1V549h-1zM742 517h1V540h-1zM743 516h1V541h-1zM744 515h1V542h-1zM745 512h1V543h-1zM746 517h1V549h-1zM747 513h1V545h-1zM748 510h1V544h-1zM749 515h1V542h-1zM750 515h1V540h-1zM751 518h1V546h-1zM752 509h1V542h-1zM753 518h1V541h-1zM754 515h1V545h-1zM755 516h1V541h-1zM756 513h1V544h-1zM757 518h1V540h-1zM758 515h1V543h-1zM759 515h1V543h-1zM760 514h1V544h-1zM761 514h1V549h-1zM762 518h1V542h-1zM763 518h1V550h-1zM764 512h1V546h-1zM765 518h1V545h-1zM766 512h1V544h-1zM767 514h1V541h-1zM768 515h1V546h-1zM769 517h1V543h-1zM770 514h1V543h-1zM771 517h1V540h-1zM772 508h1V540h-1zM773 510h1V545h-1zM774 513h1V541h-1zM775 518h1V542h-1zM776 514h1V550h-1zM777 518h1V547h-1zM778 516h1V547h-1zM779 513h1V544h-1zM780 515h1V540h-1zM781 513h1V543h-1zM782 517h1V545h-1zM783 511h1V540h-1zM784 518h1V541h-1zM785 515h1V540h-1zM786 518h1V540h-1zM787 517h1V545h-1zM788 514h1V545h-1zM789 510h1V543h-1zM790 517h1V545h-1zM791 515h1V541h-1zM792 511h1V545h-1zM793 517h1V541h-1zM794 515h1V542h-1zM795 518h1V540h-1zM796 516h1V540h-1zM797 516h1V543h-1zM798 516h1V541h-1zM799 518h1V542h-1zM800 512h1V541h-1zM801 517h1V542h-1zM802 516h1V544h-1zM803 511h1V544h-1zM804 515h1V542h-1zM805 514h1V540h-1zM806 511h1V540h-1zM807 518h1V543h-1zM808 518h1V544h-1zM809 516h1V546h-1zM810 514h1V541h-1zM811 516h1V546h-1zM812 514h1V543h-1zM813 514h1V543h-1zM814 510h1V540h-1zM815 517h1V540h-1zM816 518h1V544h-1zM817 517h1V540h-1zM818 518h1V543h-1zM819 514h1V544h-1zM820 517h1V542h-1zM821 516h1V547h-1zM822 507h1V541h-1zM823 516h1V544h-1zM824 516h1V540h-1zM825 518h1V541h-1zM826 516h1V541h-1zM827 512h1V548h-1zM828 513h1V546h-1zM829 516h1V543h-1zM830 518h1V540h-1zM831 512h1V542h-1zM832 517h1V540h-1zM833 515h1V541h-1zM834 518h1V542h-1zM835 513h1V540h-1zM836 516h1V540h-1zM837 516h1V540h-1zM838 517h1V541h-1zM839 513h1V547h-1zM840 515h1V540h-1zM841 515h1V547h-1zM842 512h1V540h-1zM843 513h1V542h-1zM844 511h1V540h-1zM845 516h1V550h-1zM846 515h1V541h-1zM847 512h1V543h-1zM848 518h1V541h-1zM849 517h1V540h-1zM850 514h1V542h-1zM851 508h1V552h-1zM852 516h1V540h-1zM853 515h1V541h-1zM854 516h1V550h-1zM855 513h1V542h-1zM856 516h1V543h-1zM857 509h1V542h-1zM858 517h1V544h-1zM859 512h1V541h-1zM860 512h1V545h-1zM861 513h1V548h-1zM862 516h1V545h-1zM863 516h1V541h-1zM864 517h1V546h-1zM865 518h1V543h-1zM866 512h1V543h-1zM867 517h1V549h-1zM868 513h1V544h-1zM869 511h1V547h-1zM870 515h1V542h-1zM871 518h1V540h-1zM872 511h1V541h-1zM873 518h1V545h-1zM874 516h1V542h-1zM875 516h1V542h-1zM876 517h1V541h-1zM877 518h1V542h-1zM878 517h1V541h-1zM879 511h1V547h-1zM880 518h1V540h-1zM881 517h1V543h-1zM882 518h1V547h-1zM883 518h1V540h-1zM884 512h1V542h-1zM885 515h1V541h-1zM886 517h1V546h-1zM887 518h1V544h-1zM888 512h1V541h-1zM889 514h1V542h-1zM890 515h1V545h-1zM891 514h1V547h-1zM892 517h1V545h-1zM893 516h1V543h-1zM894 517h1V550h-1zM895 516h1V544h-1zM896 516h1V540h-1zM897 517h1V542h-1zM898 514h1V542h-1zM899 515h1V542h-1zM900 517h1V550h-1zM901 514h1V545h-1zM902 516h1V545h-1zM903 518h1V542h-1zM904 509h1V543h-1zM905 517h1V541h-1zM906 516h1V540h-1zM907 514h1V543h-1zM908 518h1V545h-1zM909 515h1V543h-1zM910 516h1V541h-1zM911 515h1V540h-1zM912 515h1V541h-1zM913 518h1V541h-1zM914 515h1V543h-1zM915 508h1V543h-1zM916 512h1V544h-1zM917 518h1V544h-1zM918 515h1V543h-1zM919 515h1V540h-1zM920 518h1V545h-1zM921 515h1V542h-1zM922 517h1V541h-1zM923 517h1V542h-1zM924 513h1V544h-1zM925 517h1V541h-1zM926 515h1V540h-1zM927 518h1V545h-1zM928 514h1V541h-1zM929 514h1V542h-1zM930 516h1V542h-1zM931 515h1V543h-1zM932 517h1V544h-1zM933 516h1V549h-1zM934 517h1V548h-1zM935 517h1V540h-1zM936 515h1V543h-1zM937 517h1V541h-1zM938 514h1V545h-1zM939 512h1V544h-1zM940 515h1V540h-1zM941 518h1V546h-1zM942 514h1V542h-1zM943 518h1V540h-1zM944 509h1V548h-1zM945 518h1V546h-1zM946 514h1V542h-1zM947 517h1V545h-1zM948 517h1V543h-1zM949 515h1V548h-1zM950 514h1V541h-1zM951 518h1V544h-1zM952 515h1V551h-1zM953 516h1V541h-1zM954 515h1V543h-1zM955 515h1V540h-1zM956 511h1V541h-1zM957 517h1V543h-1zM958 513h1V540h-1zM959 516h1V543h-1zM960 517h1V542h-1zM961 513h1V547h-1zM962 512h1V541h-1zM963 518h1V540h-1zM964 518h1V541h-1zM965 518h1V542h-1zM966 516h1V543h-1zM967 510h1V546h-1zM968 518h1V546h-1zM969 518h1V542h-1zM970 516h1V543h-1zM971 516h1V544h-1zM972 517h1V540h-1zM973 516h1V544h-1zM974 513h1V544h-1zM975 516h1V543h-1zM976 513h1V540h-1zM977 507h1V543h-1zM978 514h1V542h-1zM979 515h1V540h-1zM980 511h1V544h-1zM981 517h1V544h-1zM982 517h1V540h-1zM983 518h1V541h-1zM984 517h1V544h-1zM985 518h1V547h-1zM986 516h1V543h-1zM987 511h1V544h-1zM988 516h1V544h-1zM989 511h1V548h-1zM990 514h1V541h-1zM991 518h1V542h-1zM992 517h1V543h-1zM993 518h1V541h-1zM994 513h1V541h-1zM995 517h1V540h-1zM996 516h1V540h-1zM997 518h1V540h-1zM998 509h1V542h-1zM999 516h1V545h-1zM1000 514h1V548h-1zM1001 509h1V541h-1zM1002 514h1V541h-1zM1003 514h1V540h-1zM1004 517h1V540h-1zM1005 514h1V543h-1zM1006 518h1V544h-1zM1007 513h1V542h-1zM1008 514h1V543h-1zM1009 508h1V541h-1zM1010 518h1V545h-1zM1011 517h1V540h-1zM1012 516h1V543h-1zM1013 514h1V541h-1zM1014 514h1V540h-1zM1015 511h1V541h-1z" fill="#ee22ee"/><rect x="16" y="519" width="1000" height="20" fill="#ff00ff"/><rect x="181" y="500" width="4" height="55" fill="#000"/><rect x="180" y="216" width="1" height="333" fill="#a02ca0"/><rect x="185" y="216" width="1" height="333" fill="#a02ca0"/><rect x="180" y="140" width="6" height="76" fill="#ff00ff"/><rect x="180" y="216" width="2" height="6" fill="#e010e0"/><rect x="184" y="216" width="2" height="5" fill="#d010d0"/><rect x="367" y="500" width="4" height="55" fill="#000"/><rect x="366" y="216" width="1" height="333" fill="#a02ca0"/><rect x="371" y="216" width="1" height="333" fill="#a02ca0"/><rect x="366" y="141" width="6" height="75" fill="#ff00ff"/><rect x="366" y="216" width="2" height="6" fill="#e010e0"/><rect x="370" y="216" width="2" height="5" fill="#d010d0"/><rect x="552" y="500" width="4" height="55" fill="#000"/><rect x="551" y="216" width="1" height="333" fill="#a02ca0"/><rect x="556" y="216" width="1" height="333" fill="#a02ca0"/><rect x="551" y="136" width="6" height="80" fill="#ff00ff"/><rect x="551" y="216" width="2" height="6" fill="#e010e0"/><rect x="555" y="216" width="2" height="5" fill="#d010d0"/><rect x="738" y="500" width="3" height="55" fill="#000"/><rect x="737" y="216" width="1" height="333" fill="#a02ca0"/><rect x="741" y="216" width="1" height="333" fill="#a02ca0"/><rect x="737" y="136" width="5" height="80" fill="#ff00ff"/><rect x="737" y="216" width="2" height="6" fill="#e010e0"/><rect x="740" y="216" width="2" height="5" fill="#d010d0"/><rect x="923" y="500" width="4" height="55" fill="#000"/><rect x="922" y="216" width="1" height="333" fill="#a02ca0"/><rect x="927" y="216" width="1" height="333" fill="#a02ca0"/><rect x="922" y="136" width="6" height="80" fill="#ff00ff"/><rect x="922" y="216" width="2" height="6" fill="#e010e0"/><rect x="926" y="216" width="2" height="5" fill="#d010d0"/><rect x="181" y="128" width="1" height="12" fill="#d828d8"/><rect x="183" y="121" width="1" height="19" fill="#d040d0"/><rect x="182" y="133" width="3" height="7" fill="#e818e8"/><rect x="369" y="128" width="2" height="13" fill="#e020e0"/><rect x="369" y="121" width="1" height="7" fill="#d050d0"/><rect x="367" y="133" width="1" height="8" fill="#d030d0"/><rect x="553" y="128" width="4" height="8" fill="#e020e0"/><rect x="553" y="122" width="1" height="6" fill="#d050d0"/><rect x="737" y="123" width="1" height="13" fill="#d040d0"/><rect x="740" y="121" width="1" height="15" fill="#d040d0"/><rect x="922" y="36" width="1" height="26" fill="#a040a0"/><polygon points="511,36 521,36 516,45.5" fill="#ff9a10" shape-rendering="geometricPrecision"/><path d="M143.5 347.5H176.5L186 357.5L176.5 367.5H143.5Z" fill="#000" stroke="#e0a040" stroke-width="1"/><polygon points="995,406.8 1004,401.8 1004,411.5" fill="#ff20ff" shape-rendering="geometricPrecision"/><rect x="1004" y="406" width="20" height="1" fill="#e850e8"/><rect x="1004" y="407" width="20" height="1" fill="#a040a0"/><circle cx="10.5" cy="521.5" r="8.3" fill="#ff00ff" stroke="#ffa030" stroke-width="2" shape-rendering="geometricPrecision"/></svg>
<div class="t" style="left:7.50px;top:516.19px;font-size:11px;font-weight:bold;color:#4a0a60;">3</div>
<div class="t" style="left:145.00px;top:352.54px;font-size:10px;font-weight:normal;color:#e8c048;">50.0%</div>
<div class="t" style="left:71.00px;top:376.69px;font-size:11px;font-weight:normal;color:#c050c0;transform:scaleX(0.87);transform-origin:0 0">CQ</div>
<div class="a" style="left:869px;top:62px;width:127px;height:135px;border:1px solid #8a90a8;border-radius:5px;background:linear-gradient(#3c4678,#1c2452 8px,#1c2452)"></div>
<div class="t" style="left:894.50px;top:73.84px;font-size:12px;font-weight:bold;color:#f0f0f0;">Ch3 Position</div>
<div class="a" style="left:881px;top:97px;width:100px;height:2px;background:#9498b0"></div>
<div class="t" style="left:910.00px;top:105.00px;font-size:13px;font-weight:bold;color:#f4f4f4;">-3.1div</div>
<div class="t" style="left:902.70px;top:140.84px;font-size:12px;font-weight:bold;color:#f0f0f0;">Ch3 Scale</div>
<div class="a" style="left:881px;top:161px;width:100px;height:2px;background:#9498b0"></div>
<div class="t" style="left:907.50px;top:171.00px;font-size:13px;font-weight:bold;color:#f4f4f4;">10.0mA</div>
<div class="a" style="left:972.2px;top:77.3px;width:16px;height:16px;border-radius:50%;background:radial-gradient(circle at 50% 40%,#ffd838,#e0a810);border:1px solid #4a3a08"></div>
<div class="t" style="left:975.90px;top:78.45px;font-size:14px;font-weight:bold;color:#080808;">a</div>
<div class="a" style="left:972.2px;top:140.9px;width:16px;height:16px;border-radius:50%;background:radial-gradient(circle at 50% 40%,#ffd838,#e0a810);border:1px solid #4a3a08"></div>
<div class="t" style="left:975.90px;top:142.05px;font-size:14px;font-weight:bold;color:#080808;">b</div>
<div class="a" style="left:21px;top:645px;width:281px;height:23px;border:1px solid #cfcfcf;border-radius:6px"></div>
<div class="a" style="left:30px;top:651px;width:33px;height:14px;border-radius:7.0px;background:#dc18e4;box-shadow:inset 0 1px 1px rgba(255,255,255,.55),inset 0 -2px 2px rgba(0,0,0,.28)"></div>
<div class="t" style="left:39.50px;top:653.88px;font-size:9px;font-weight:bold;color:#380646;">C3</div>
<div class="t" style="left:67.50px;top:650.84px;font-size:12px;font-weight:bold;color:#fff;">10.0mA/div</div>
<div class="t" style="left:181.50px;top:650.84px;font-size:12px;font-weight:bold;color:#fff;">1MΩ</div>
<div class="a" style="left:213px;top:650px;width:56px;height:16px;background:#fff"></div>
<div class="t" style="left:215.50px;top:650.73px;font-size:8px;font-weight:bold;color:#000;">B</div>
<div class="t" style="left:219.80px;top:654.99px;font-size:11px;font-weight:bold;color:#000;letter-spacing:-0.8px">W</div>
<div class="t" style="left:229.20px;top:650.84px;font-size:12px;font-weight:bold;color:#000;">:20.0M</div>
<div class="a" style="left:21px;top:673px;width:566px;height:66px;border:1px solid #cfcfcf;border-radius:6px"></div>
<div class="a" style="left:198px;top:700px;width:79px;height:38px;background:#262626"></div>
<div class="a" style="left:348px;top:700px;width:69px;height:38px;background:#262626"></div>
<div class="a" style="left:127px;top:699px;width:1px;height:39px;background:#cfcfcf"></div>
<div class="a" style="left:197px;top:699px;width:1px;height:39px;background:#cfcfcf"></div>
<div class="a" style="left:277px;top:699px;width:1px;height:39px;background:#cfcfcf"></div>
<div class="a" style="left:347px;top:699px;width:1px;height:39px;background:#cfcfcf"></div>
<div class="a" style="left:417px;top:699px;width:1px;height:39px;background:#cfcfcf"></div>
<div class="a" style="left:487px;top:699px;width:1px;height:39px;background:#cfcfcf"></div>
<div class="a" style="left:547px;top:699px;width:1px;height:39px;background:#cfcfcf"></div>
<div class="a" style="left:583px;top:699px;width:1px;height:39px;background:#cfcfcf"></div>
<div class="a" style="left:127px;top:699px;width:457px;height:1px;background:#cfcfcf"></div>
<div class="a" style="left:127px;top:718px;width:457px;height:1px;background:#cfcfcf"></div>
<div class="a" style="left:127px;top:737px;width:457px;height:1px;background:#cfcfcf"></div>
<div class="t" style="left:145.20px;top:681.84px;font-size:12px;font-weight:bold;color:#fff;">Value</div>
<div class="t" style="left:221.00px;top:681.84px;font-size:12px;font-weight:bold;color:#fff;">Mean</div>
<div class="t" style="left:301.40px;top:681.84px;font-size:12px;font-weight:bold;color:#fff;">Min</div>
<div class="t" style="left:369.90px;top:681.84px;font-size:12px;font-weight:bold;color:#fff;">Max</div>
<div class="t" style="left:433.50px;top:681.84px;font-size:12px;font-weight:bold;color:#fff;">St Dev</div>
<div class="t" style="left:499.40px;top:681.84px;font-size:12px;font-weight:bold;color:#fff;">Count</div>
<div class="t" style="left:553.80px;top:681.84px;font-size:12px;font-weight:bold;color:#fff;">Info</div>
<div class="t" style="left:129.00px;top:701.84px;font-size:12px;font-weight:bold;color:#fff;">-187.5μs</div>
<div class="t" style="left:199.00px;top:701.84px;font-size:12px;font-weight:bold;color:#fff;">-187.46μ</div>
<div class="t" style="left:278.70px;top:701.84px;font-size:12px;font-weight:bold;color:#fff;">-187.5μ</div>
<div class="t" style="left:348.50px;top:701.84px;font-size:12px;font-weight:bold;color:#fff;">-187.5μ</div>
<div class="t" style="left:418.80px;top:701.84px;font-size:12px;font-weight:bold;color:#fff;">0.0</div>
<div class="t" style="left:488.50px;top:701.84px;font-size:12px;font-weight:bold;color:#fff;">1.0</div>
<div class="t" style="left:129.00px;top:720.84px;font-size:12px;font-weight:bold;color:#fff;">-169.5ms</div>
<div class="t" style="left:199.00px;top:720.84px;font-size:12px;font-weight:bold;color:#fff;">-169.51831m</div>
<div class="t" style="left:278.70px;top:720.84px;font-size:12px;font-weight:bold;color:#fff;">-169.5m</div>
<div class="t" style="left:348.50px;top:720.84px;font-size:12px;font-weight:bold;color:#fff;">-169.5m</div>
<div class="t" style="left:418.80px;top:720.84px;font-size:12px;font-weight:bold;color:#fff;">0.0</div>
<div class="t" style="left:488.50px;top:720.84px;font-size:12px;font-weight:bold;color:#fff;">1.0</div>
<div class="a" style="left:30px;top:701px;width:32px;height:12px;border-radius:6.0px;background:linear-gradient(90deg,#e4dc30 50%,#38ccd4 50%);box-shadow:inset 0 1px 1px rgba(255,255,255,.55),inset 0 -2px 2px rgba(0,0,0,.28)"></div>
<div class="t" style="left:33.20px;top:703.18px;font-size:9px;font-weight:bold;color:#101010;">C1</div>
<div class="t" style="left:45.80px;top:703.18px;font-size:9px;font-weight:bold;color:#0a2a30;">C2</div>
<div class="a" style="left:30px;top:720px;width:32px;height:12px;border-radius:6.0px;background:linear-gradient(90deg,#dc18e4 50%,#20c830 50%);box-shadow:inset 0 1px 1px rgba(255,255,255,.55),inset 0 -2px 2px rgba(0,0,0,.28)"></div>
<div class="t" style="left:33.20px;top:722.18px;font-size:9px;font-weight:bold;color:#380646;">C3</div>
<div class="t" style="left:45.80px;top:722.18px;font-size:9px;font-weight:bold;color:#043010;">C4</div>
<div class="t" style="left:69.50px;top:701.84px;font-size:12px;font-weight:bold;color:#fff;">Dely</div>
<div class="t" style="left:69.50px;top:720.84px;font-size:12px;font-weight:bold;color:#fff;">Dely*</div>
<div class="a" style="left:564.1px;top:702.9px;width:11px;height:11px;border-radius:50%;border:1px solid #dfe8f4;background:linear-gradient(135deg,#58c0d8,#8a8ad0)"></div>
<div class="t" style="left:566.60px;top:704.38px;font-size:9px;font-weight:bold;color:#9a3cb8;">?</div>
<div class="a" style="left:564.1px;top:722.0px;width:11px;height:11px;border-radius:50%;border:1px solid #dfe8f4;background:linear-gradient(135deg,#58c0d8,#8a8ad0)"></div>
<div class="t" style="left:566.60px;top:723.48px;font-size:9px;font-weight:bold;color:#9a3cb8;">?</div>
<div class="a" style="left:591px;top:644px;width:186px;height:37px;border:1px solid #cfcfcf;border-radius:6px"></div>
<div class="a" style="left:598px;top:651px;width:14px;height:14px;background:#d0d0d0"></div>
<div class="t" style="left:600.50px;top:652.84px;font-size:12px;font-weight:normal;color:#000;">A</div>
<div class="a" style="left:615px;top:652px;width:33px;height:12px;border-radius:6.0px;background:#dc18e4;box-shadow:inset 0 1px 1px rgba(255,255,255,.55),inset 0 -2px 2px rgba(0,0,0,.28)"></div>
<div class="t" style="left:624.50px;top:653.88px;font-size:9px;font-weight:bold;color:#380646;">C3</div>
<svg class="a" style="left:648px;top:648px" width="20" height="20"><path d="M3 14.5H7.5L12.5 4.5H16.5" stroke="#fff" stroke-width="2" fill="none"/></svg>
<div class="t" style="left:667.50px;top:650.84px;font-size:12px;font-weight:bold;color:#fff;">19.2mA</div>
<div class="t" style="left:599.00px;top:667.84px;font-size:12px;font-weight:bold;color:#fff;">None</div>
<div class="t" style="left:715.00px;top:667.84px;font-size:12px;font-weight:bold;color:#fff;">Normal</div>
<div class="a" style="left:781px;top:644px;width:231px;height:93px;border:1px solid #cfcfcf;border-radius:6px"></div>
<div class="t" style="left:789.50px;top:650.84px;font-size:12px;font-weight:bold;color:#fff;">100.0ms/div</div>
<div class="t" style="left:879.50px;top:650.84px;font-size:12px;font-weight:bold;color:#fff;">100.0kS/s</div>
<div class="t" style="left:963.70px;top:650.84px;font-size:12px;font-weight:bold;color:#fff;">10.0μs</div>
<div class="t" style="left:789.50px;top:671.84px;font-size:12px;font-weight:bold;color:#e01818;">Stopped</div>
<div class="t" style="left:878.70px;top:671.84px;font-size:12px;font-weight:bold;color:#fff;">Single Seq</div>
<div class="a" style="left:992.5px;top:672px;width:4px;height:13px;background:#eeea30;border-radius:1.5px"></div>
<div class="a" style="left:991px;top:681.5px;width:7px;height:7px;border-radius:50%;background:#eeea30"></div>
<div class="t" style="left:789.50px;top:691.84px;font-size:12px;font-weight:bold;color:#fff;">1 acqs</div>
<div class="t" style="left:929.00px;top:691.84px;font-size:12px;font-weight:bold;color:#fff;">RL:100.0k</div>
<div class="t" style="left:789.00px;top:713.84px;font-size:12px;font-weight:bold;color:#fff;">Auto</div>
<div class="t" style="left:830.50px;top:713.84px;font-size:12px;font-weight:bold;color:#fff;">October 23, 2024</div>
<div class="t" style="left:956.00px;top:713.84px;font-size:12px;font-weight:bold;color:#f0a030;">22:30:52</div>
</body></html>
